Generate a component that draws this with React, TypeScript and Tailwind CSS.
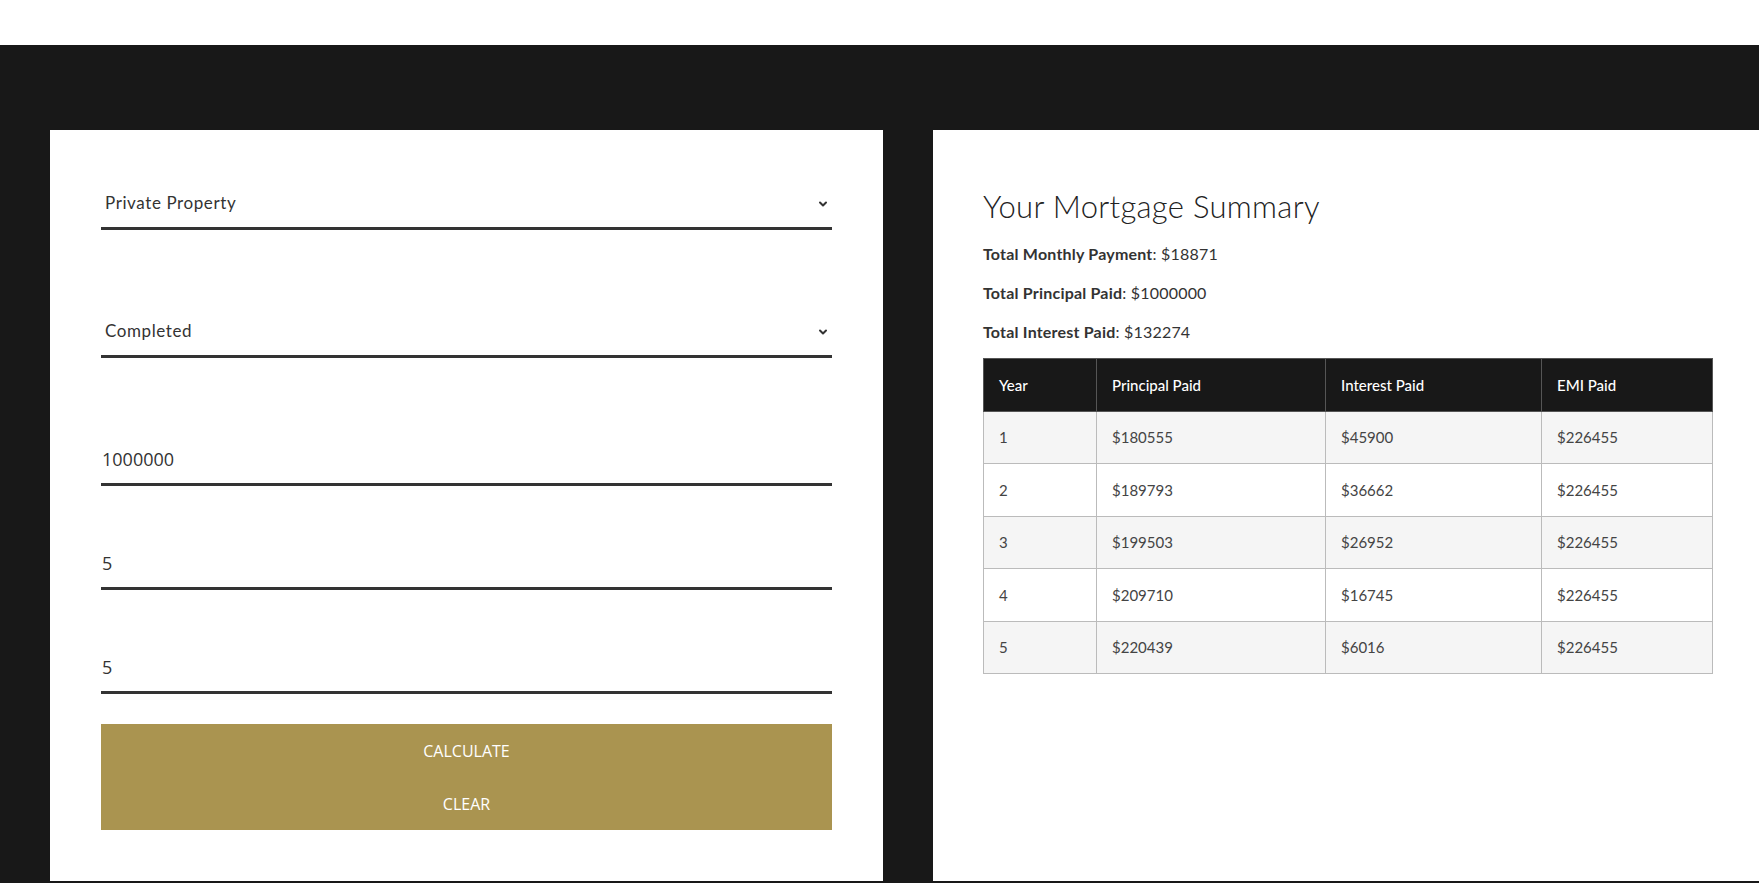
import { ChevronDown } from 'lucide-react';

const rows = [
  { year: 1, principal: '$180555', interest: '$45900', emi: '$226455' },
  { year: 2, principal: '$189793', interest: '$36662', emi: '$226455' },
  { year: 3, principal: '$199503', interest: '$26952', emi: '$226455' },
  { year: 4, principal: '$209710', interest: '$16745', emi: '$226455' },
  { year: 5, principal: '$220439', interest: '$6016', emi: '$226455' },
];

function SelectField({ value, className }: { value: string; className?: string }) {
  return (
    <div className={`flex h-[51px] items-center justify-between border-b-[3px] border-[#333] pl-[4px] pr-[3px] ${className ?? ''}`}>
      <span className="text-[17px] tracking-[0.6px] text-[#333] font-['Lato',sans-serif]">{value}</span>
      <ChevronDown className="w-[12px] h-[12px] text-[#333] mt-[2px]" strokeWidth={4} />
    </div>
  );
}

function InputField({ value, className }: { value: string; className?: string }) {
  return (
    <div className={`flex h-[51px] items-center border-b-[3px] border-[#333] pl-[1px] ${className ?? ''}`}>
      <span className="text-[18px] text-[#333] font-['Open_Sans',sans-serif]">{value}</span>
    </div>
  );
}

export default function App() {
  return (
    <div className="w-full bg-white font-['Lato',sans-serif] overflow-hidden">
      <div className="h-[45px] bg-white"></div>

      <div className="bg-[#181818] flex gap-[50px] pt-[85px] pl-[50px] pb-[2px]">
        {/* Calculator form */}
        <div className="w-[833px] shrink-0 bg-white pt-[49px] pb-[51px] px-[51px]">
          <SelectField value="Private Property" className="mb-[77px]" />
          <SelectField value="Completed" className="mb-[77px]" />
          <InputField value="1000000" className="mb-[53px]" />
          <InputField value="5" className="mb-[53px]" />
          <InputField value="5" className="mb-[30px]" />

          <div className="bg-[#aa9450] font-['Open_Sans',sans-serif] text-[16px] text-white">
            <div className="h-[53px] flex items-center justify-center">CALCULATE</div>
            <div className="h-[53px] flex items-center justify-center">CLEAR</div>
          </div>
        </div>

        {/* Summary */}
        <div className="flex-1 bg-white pt-[58px] pl-[50px] pr-[46px]">
          <h2 className="text-[31px] tracking-[0.3px] leading-[36px] font-light text-[#222] mb-[18px]">Your Mortgage Summary</h2>
          <p className="text-[16px] tracking-[0.2px] leading-[24px] text-[#333] mb-[15px]">
            <span className="font-bold">Total Monthly Payment</span>: $18871
          </p>
          <p className="text-[16px] tracking-[0.2px] leading-[24px] text-[#333] mb-[15px]">
            <span className="font-bold">Total Principal Paid</span>: $1000000
          </p>
          <p className="text-[16px] tracking-[0.2px] leading-[24px] text-[#333] mb-[14px]">
            <span className="font-bold">Total Interest Paid</span>: $132274
          </p>

          <table className="w-[730px] border-collapse text-[15px] leading-[24.5px] text-left">
            <thead>
              <tr className="bg-[#181818] text-white">
                <th className="w-[113px] font-medium py-[13.5px] pl-[15px] border border-[#555]">Year</th>
                <th className="w-[229px] font-medium py-[13.5px] pl-[15px] border border-[#555]">Principal Paid</th>
                <th className="w-[216px] font-medium py-[13.5px] pl-[15px] border border-[#555]">Interest Paid</th>
                <th className="font-medium py-[13.5px] pl-[15px] border border-[#555]">EMI Paid</th>
              </tr>
            </thead>
            <tbody>
              {rows.map((r, i) => (
                <tr key={r.year} className={i % 2 === 0 ? 'bg-[#f5f5f5]' : 'bg-white'}>
                  <td className="py-[13.5px] pl-[15px] border border-[#bbb] text-[#444]">{r.year}</td>
                  <td className="py-[13.5px] pl-[15px] border border-[#bbb] text-[#444]">{r.principal}</td>
                  <td className="py-[13.5px] pl-[15px] border border-[#bbb] text-[#444]">{r.interest}</td>
                  <td className="py-[13.5px] pl-[15px] border border-[#bbb] text-[#444]">{r.emi}</td>
                </tr>
              ))}
            </tbody>
          </table>
        </div>
      </div>
    </div>
  );
}
